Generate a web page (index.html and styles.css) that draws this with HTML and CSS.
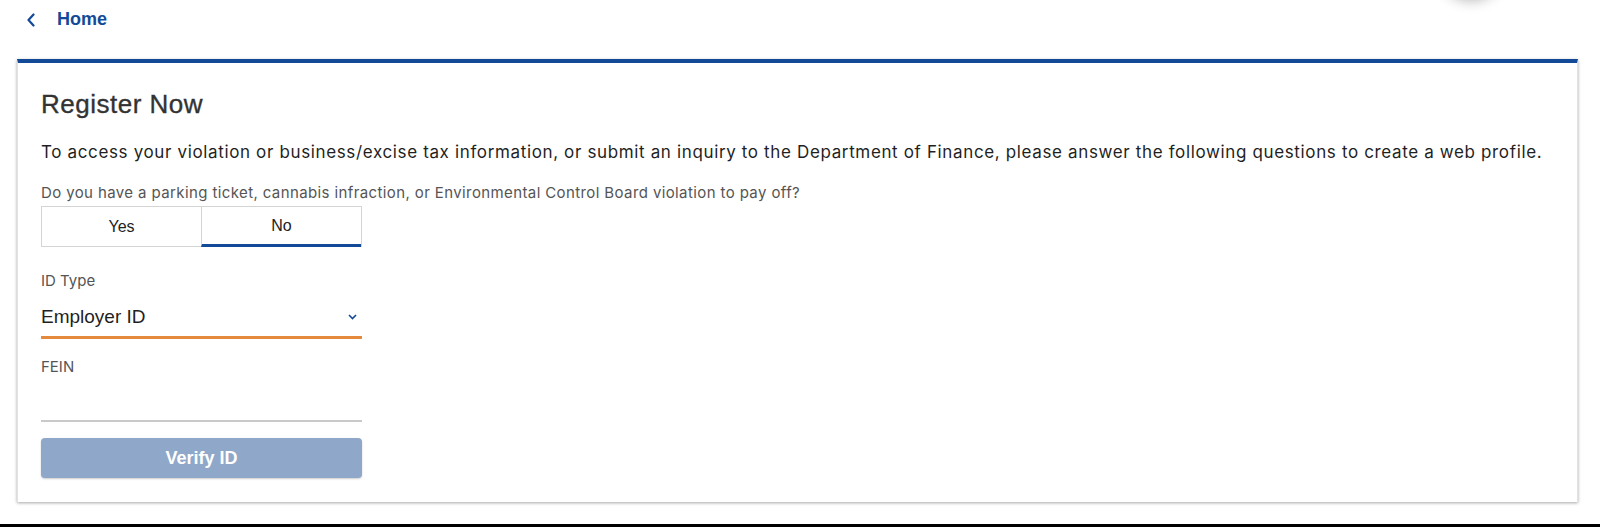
FILE: index.html
```html
<!DOCTYPE html>
<html lang="en">
<head>
<meta charset="utf-8">
<title>Register Now</title>
<link rel="stylesheet" href="styles.css">
</head>
<body>
<div class="fab-shadow"></div>
<header class="topbar">
  <a class="back" href="#">
    <svg class="back-icon" width="10" height="14" viewBox="0 0 10 14" aria-hidden="true"><path d="M7.5 1.5 L2.5 7 L7.5 12.5" fill="none" stroke="#134a98" stroke-width="2.2" stroke-linecap="round" stroke-linejoin="round"/></svg>
    <span class="back-text">Home</span>
  </a>
</header>
<main class="card">
  <h1 class="title">Register Now</h1>
  <p class="intro">To access your violation or business/excise tax information, or submit an inquiry to the Department of Finance, please answer the following questions to create a web profile.</p>
  <div class="question">Do you have a parking ticket, cannabis infraction, or Environmental Control Board violation to pay off?</div>
  <div class="toggle">
    <button class="toggle-btn">Yes</button>
    <button class="toggle-btn active">No</button>
  </div>
  <div class="field-label label-id">ID Type</div>
  <div class="select">
    <span class="select-value">Employer ID</span>
    <svg class="select-chev" width="9" height="6" viewBox="0 0 9 6" aria-hidden="true"><path d="M1 1 L4.5 4.5 L8 1" fill="none" stroke="#134a98" stroke-width="1.6"/></svg>
  </div>
  <div class="field-label label-fein">FEIN</div>
  <div class="input"></div>
  <button class="verify">Verify ID</button>
</main>
<div class="bottom-bar"></div>
</body>
</html>
```

FILE: styles.css
```css
* { box-sizing: border-box; }
html, body { margin: 0; padding: 0; background: #fff; }
body {
  font-family: "Liberation Sans", Arial, sans-serif;
  color: #222;
  position: relative;
  overflow: hidden;
  height: 527px;
}
.fab-shadow {
  position: absolute;
  top: -64px;
  left: 1440px;
  width: 62px;
  height: 62px;
  border-radius: 50%;
  background: #fff;
  box-shadow: 0 2px 14px rgba(0,0,0,0.32);
}
.topbar {
  height: 39px;
  margin-bottom: 20px;
  display: flex;
  align-items: center;
  padding-left: 26px;
}
.back {
  display: flex;
  align-items: center;
  text-decoration: none;
  color: #134a98;
  height: 39px;
}
.back-icon { margin-right: 21px; }
.back-text {
  font-size: 18px;
  font-weight: bold;
  line-height: 39px;
}
.card {
  margin: 0 22px 0 17px;
  border-top: 4px solid #134a98;
  border-left: 1px solid #e2e2e2;
  border-right: 1px solid #e2e2e2;
  box-shadow: 0 1px 3px rgba(0,0,0,0.35);
  padding: 26px 23px 24px 23px;
  height: 443px;
  background: #fff;
}
.title {
  margin: 0;
  font-size: 26px;
  font-weight: normal;
  line-height: 30px;
  color: #333;
  letter-spacing: 0.5px;
  -webkit-text-stroke: 0.35px #333;
}
.intro {
  margin: 21px 0 0 0;
  font-family: Inter, "Liberation Sans", sans-serif;
  font-size: 17px;
  letter-spacing: 0.64px;
  line-height: 24px;
  color: #1f1f1f;
}
.question {
  margin-top: 19px;
  font-family: Inter, "Liberation Sans", sans-serif;
  font-size: 15px;
  letter-spacing: 0.39px;
  line-height: 20px;
  color: #555;
}
.toggle {
  margin-top: 3px;
  display: flex;
  width: 321px;
  height: 41px;
  border: 1px solid #d4d4d4;
}
.toggle-btn {
  flex: 1;
  border: 0;
  background: #fff;
  font-family: "Liberation Sans", Arial, sans-serif;
  font-size: 16px;
  color: #222;
  padding: 0;
  margin: 0;
  display: flex;
  align-items: center;
  justify-content: center;
}
.toggle-btn + .toggle-btn { border-left: 1px solid #d4d4d4; }
.toggle-btn.active {
  border-bottom: 3px solid #134a98;
  margin-bottom: -1px;
  padding-top: 1px;
}
.field-label {
  font-family: Inter, "Liberation Sans", sans-serif;
  font-size: 15px;
  line-height: 20px;
  color: #555;
}
.label-id { margin-top: 24px; }
.label-fein { margin-top: 18px; }
.select {
  width: 321px;
  height: 48px;
  padding-top: 6px;
  border-bottom: 3px solid #e58a3c;
  display: flex;
  align-items: center;
  justify-content: space-between;
  padding-right: 5px;
}
.select-value {
  font-size: 19px;
  line-height: 39px;
  color: #1f1f1f;
}
.select-chev { display: block; }
.input {
  width: 321px;
  height: 45px;
  border-bottom: 2px solid #c9c9c9;
}
.verify {
  margin-top: 16px;
  width: 321px;
  height: 40px;
  border: 0;
  border-radius: 4px;
  background: #8fa8c9;
  color: #fff;
  font-family: "Liberation Sans", Arial, sans-serif;
  font-size: 18px;
  font-weight: bold;
  box-shadow: 0 1px 2px rgba(0,0,0,0.2);
  display: block;
  padding: 0;
}
.bottom-bar {
  margin-top: 22px;
  height: 3px;
  background: #000;
}
```
